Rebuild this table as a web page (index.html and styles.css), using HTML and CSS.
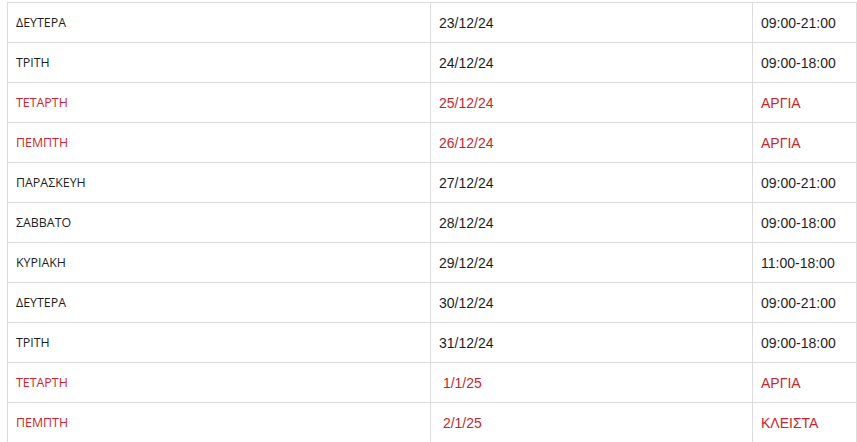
FILE: index.html
```html
<!DOCTYPE html>
<html lang="el">
<head>
<meta charset="utf-8">
<link rel="stylesheet" href="styles.css">
</head>
<body>
<table class="hours">
  <colgroup><col class="c-day"><col class="c-date"><col class="c-time"></colgroup>
  <tbody>
    <tr><td class="day">ΔΕΥΤΕΡΑ</td><td>23/12/24</td><td>09:00-21:00</td></tr>
    <tr><td class="day">ΤΡΙΤΗ</td><td>24/12/24</td><td>09:00-18:00</td></tr>
    <tr class="off"><td class="day">ΤΕΤΑΡΤΗ</td><td>25/12/24</td><td>ΑΡΓΙΑ</td></tr>
    <tr class="off"><td class="day">ΠΕΜΠΤΗ</td><td>26/12/24</td><td>ΑΡΓΙΑ</td></tr>
    <tr><td class="day">ΠΑΡΑΣΚΕΥΗ</td><td>27/12/24</td><td>09:00-21:00</td></tr>
    <tr><td class="day">ΣΑΒΒΑΤΟ</td><td>28/12/24</td><td>09:00-18:00</td></tr>
    <tr><td class="day">ΚΥΡΙΑΚΗ</td><td>29/12/24</td><td>11:00-18:00</td></tr>
    <tr><td class="day">ΔΕΥΤΕΡΑ</td><td>30/12/24</td><td>09:00-21:00</td></tr>
    <tr><td class="day">ΤΡΙΤΗ</td><td>31/12/24</td><td>09:00-18:00</td></tr>
    <tr class="off"><td class="day">ΤΕΤΑΡΤΗ</td><td>&nbsp;1/1/25</td><td>ΑΡΓΙΑ</td></tr>
    <tr class="off"><td class="day">ΠΕΜΠΤΗ</td><td>&nbsp;2/1/25</td><td>ΚΛΕΙΣΤΑ</td></tr>
  </tbody>
</table>
</body>
</html>
```
FILE: styles.css
```css
html, body {
  margin: 0;
  padding: 0;
  background: #fff;
}
body {
  padding: 2px 0 0 7px;
}
.hours {
  border-collapse: collapse;
  width: 849px;
  table-layout: fixed;
  font-family: "Liberation Sans", Arial, sans-serif;
  font-size: 14px;
  color: #1e1e1e;
}
.c-day { width: 423px; }
.c-date { width: 322px; }
.c-time { width: 104px; }
.hours td {
  border: 1px solid #dcdcdc;
  height: 40px;
  padding: 0 8px;
  box-sizing: border-box;
  vertical-align: middle;
  white-space: nowrap;
}
.hours td.day {
  font-family: "Open Sans", "Noto Sans", sans-serif;
  font-size: 12.4px;
}
.hours tr.off td {
  color: #c8262c;
}
```
